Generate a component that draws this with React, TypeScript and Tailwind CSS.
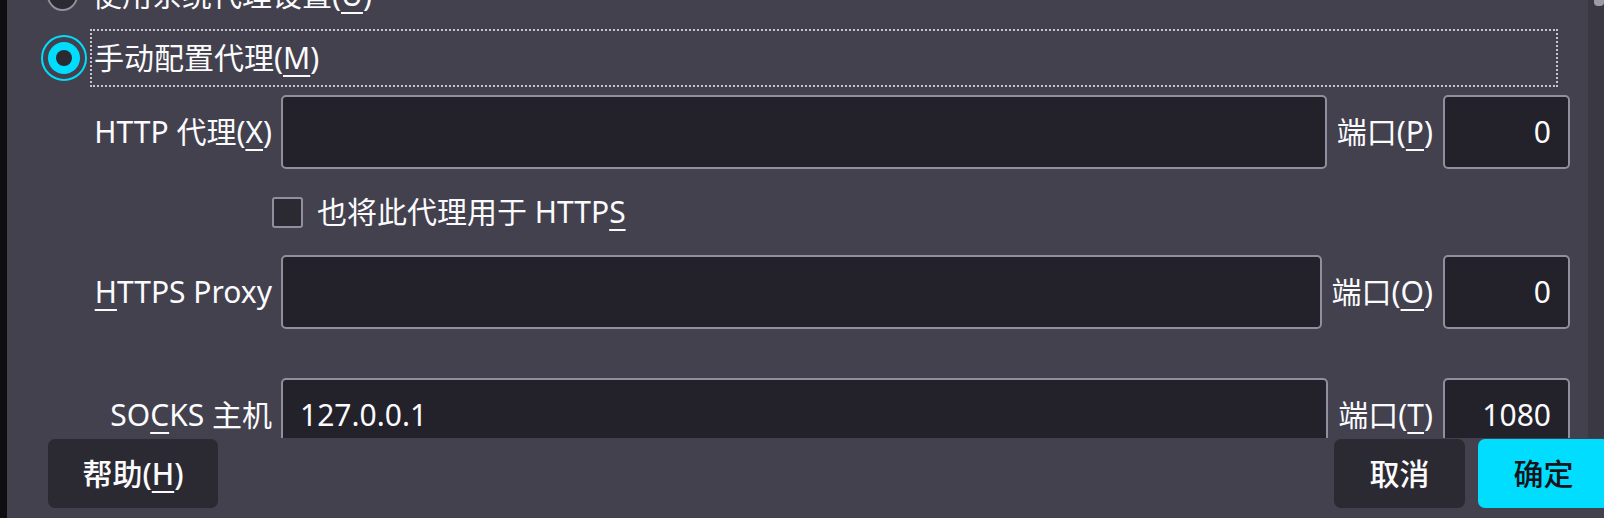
import React from "react";

const U = ({ children }: { children: React.ReactNode }) => (
  <span className="underline decoration-2 underline-offset-[6px]">{children}</span>
);

function Field({
  label,
  port,
  portLabel,
  value,
}: {
  label: React.ReactNode;
  port: string;
  portLabel: React.ReactNode;
  value?: string;
}) {
  return (
    <div className="flex items-center h-[74px]">
      <div className="w-[265px] text-right whitespace-nowrap">{label}</div>
      <div className="ml-[9px] flex-1 h-full flex items-center px-[17px] bg-[#23222b] border-2 border-[#8f8f9d] rounded-[5px]">
        {value}
      </div>
      <div className="mx-[10px] whitespace-nowrap">{portLabel}</div>
      <div className="w-[127px] h-full flex items-center justify-end px-[17px] bg-[#23222b] border-2 border-[#8f8f9d] rounded-[5px]">
        {port}
      </div>
    </div>
  );
}

export default function App() {
  return (
    <div className="w-[1604px] h-[518px] overflow-hidden flex bg-[#42414d] text-[#fbfbfe] text-[30px] leading-none font-['Noto_Sans','Noto_Sans_CJK_SC',sans-serif]">
      {/* left edge */}
      <div className="w-[7px] shrink-0 bg-[#0e0e11]" />

      <div className="flex-1 flex flex-col min-w-0">
        {/* scroll area */}
        <div className="h-[438px] flex shrink-0">
          <div className="flex-1 overflow-hidden">
            <div className="-mt-[34px] flex flex-col pr-[18px]">
              {/* system proxy radio (cut off) */}
              <div className="flex items-center h-[58px] pl-[32px]">
                <div className="w-[46px] flex justify-center">
                  <div className="w-[31px] h-[31px] rounded-full border-2 border-[#8f8f9d] bg-[#2b2a33]" />
                </div>
                <div className="ml-[4px] pl-[3px]">
                  使用系统代理设置(<U>U</U>)
                </div>
              </div>

              {/* manual proxy radio */}
              <div className="flex items-center h-[58px] mt-[5px] pl-[34px] pr-[12px]">
                <div className="w-[46px] h-[46px] rounded-full border-2 border-[#00ddff] flex items-center justify-center">
                  <div className="w-[32px] h-[32px] rounded-full bg-[#00ddff] flex items-center justify-center">
                    <div className="w-[16px] h-[16px] rounded-full bg-[#2b2a33]" />
                  </div>
                </div>
                <div className="ml-[3px] flex-1 h-full flex items-center pl-[2px] border-2 border-dotted border-[#c4c4cc]">
                  手动配置代理(<U>M</U>)
                </div>
              </div>

              <div className="mt-[8px]">
                <Field
                  label={<>HTTP 代理(<U>X</U>)</>}
                  portLabel={<>端口(<U>P</U>)</>}
                  port="0"
                />
              </div>

              {/* also use for https */}
              <div className="h-[86px] flex items-center pl-[265px]">
                <div className="w-[31px] h-[31px] rounded-[3px] border-2 border-[#8f8f9d] bg-[#2b2a33]" />
                <div className="ml-[14px]">
                  也将此代理用于 HTTP<U>S</U>
                </div>
              </div>

              <Field
                label={<><U>H</U>TTPS Proxy</>}
                portLabel={<>端口(<U>O</U>)</>}
                port="0"
              />

              <div className="mt-[49px]">
                <Field
                  label={<>SO<U>C</U>KS 主机</>}
                  portLabel={<>端口(<U>T</U>)</>}
                  port="1080"
                  value="127.0.0.1"
                />
              </div>
            </div>
          </div>

          {/* scrollbar */}
          <div className="w-[16px] shrink-0 bg-[#3a3943] relative">
            <div className="absolute right-0 top-0 w-[10px] h-[6px] rounded-b-[4px] bg-[#9d9ca6]" />
          </div>
        </div>

        {/* buttons */}
        <div className="flex-1 flex items-start justify-between pt-[1px] pl-[41px]">
          <button className="w-[170px] h-[69px] rounded-[7px] bg-[#2b2a33] font-medium">
            帮助(<U>H</U>)
          </button>
          <div className="flex gap-[13px] -mr-[5px]">
            <button className="w-[131px] h-[69px] rounded-[7px] bg-[#2b2a33] font-medium">
              取消
            </button>
            <button className="w-[131px] h-[69px] rounded-[7px] bg-[#00ddff] text-[#15141a] font-medium">
              确定
            </button>
          </div>
        </div>
      </div>
    </div>
  );
}
